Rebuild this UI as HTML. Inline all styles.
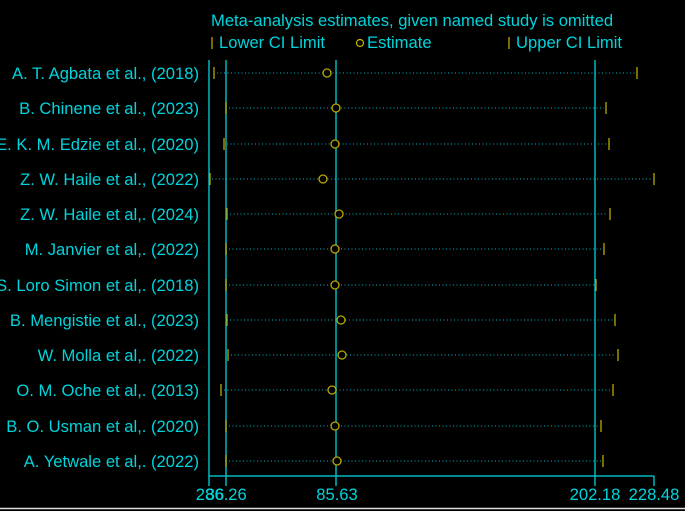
<!DOCTYPE html>
<html><head><style>
html,body{margin:0;padding:0;background:#000;width:685px;height:511px;overflow:hidden}
svg text{font-family:"Liberation Sans",sans-serif;fill:#00d4dc;font-size:16.6px}
</style></head><body>
<svg width="685" height="511" xmlns="http://www.w3.org/2000/svg">
<rect width="685" height="511" fill="#000"/>
<text x="211" y="26">Meta-analysis estimates, given named study is omitted</text>
<line x1="212" y1="37" x2="212" y2="49" stroke="#c8b400" stroke-width="1.2"/>
<text x="219" y="48">Lower CI Limit</text>
<circle cx="360" cy="43" r="3.5" fill="none" stroke="#c8b400" stroke-width="1.2"/>
<text x="367" y="48">Estimate</text>
<line x1="509" y1="37" x2="509" y2="49" stroke="#c8b400" stroke-width="1.2"/>
<text x="516" y="48">Upper CI Limit</text>
<g stroke="#00b8c0" stroke-width="1.5">
<line x1="209" y1="60" x2="209" y2="486"/>
<line x1="226" y1="60" x2="226" y2="486"/>
<line x1="336" y1="60" x2="336" y2="486"/>
<line x1="595" y1="60" x2="595" y2="486"/>
<line x1="209" y1="476" x2="654" y2="476"/>
<line x1="654" y1="476" x2="654" y2="486"/>
</g>
<line x1="0" y1="508.5" x2="685" y2="508.5" stroke="#ddd" stroke-width="1.5"/>
<g text-anchor="middle">
<text x="205" y="500">28</text><text x="226" y="500">36.26</text><text x="215" y="500">36</text>
<text x="337" y="500">85.63</text><text x="595" y="500">202.18</text><text x="654" y="500">228.48</text>
</g>
<g text-anchor="end">
<text x="199" y="79">A. T. Agbata et al., (2018)</text>
<text x="199" y="114">B. Chinene et al., (2023)</text>
<text x="199" y="150">E. K. M. Edzie et al., (2020)</text>
<text x="199" y="185">Z. W. Haile et al., (2022)</text>
<text x="199" y="220">Z. W. Haile et al,. (2024)</text>
<text x="199" y="255">M. Janvier et al,. (2022)</text>
<text x="199" y="291">S. Loro Simon et al,. (2018)</text>
<text x="199" y="326">B. Mengistie et al., (2023)</text>
<text x="199" y="361">W. Molla et al,. (2022)</text>
<text x="199" y="396">O. M. Oche et al,. (2013)</text>
<text x="199" y="432">B. O. Usman et al,. (2020)</text>
<text x="199" y="467">A. Yetwale et al,. (2022)</text>
</g>
<g stroke-dasharray="1,2.5" stroke="#00b8c0" stroke-width="1">
<line x1="217" y1="73" x2="635" y2="73"/>
<line x1="229" y1="108" x2="604" y2="108"/>
<line x1="227" y1="144" x2="607" y2="144"/>
<line x1="212" y1="179" x2="652" y2="179"/>
<line x1="230" y1="214" x2="608" y2="214"/>
<line x1="229" y1="249" x2="602" y2="249"/>
<line x1="229" y1="285" x2="594" y2="285"/>
<line x1="230" y1="320" x2="613" y2="320"/>
<line x1="231" y1="355" x2="616" y2="355"/>
<line x1="224" y1="390" x2="611" y2="390"/>
<line x1="229" y1="426" x2="599" y2="426"/>
<line x1="229" y1="461" x2="601" y2="461"/>
</g>
<g stroke="#b8a800" stroke-width="1.3">
<path d="M214 67V79M637 67V79M226 102V114M606 102V114M224 138V150M609 138V150M210 173V185M654 173V185M227 208V220M610 208V220M226 243V255M604 243V255M226 279V291M596 279V291M227 314V326M615 314V326M228 349V361M618 349V361M221 384V396M613 384V396M226 420V432M601 420V432M226 455V467M603 455V467"/>
<g fill="#000">
<circle cx="327" cy="73" r="4"/><circle cx="336" cy="108" r="4"/><circle cx="335" cy="144" r="4"/><circle cx="323" cy="179" r="4"/><circle cx="339" cy="214" r="4"/><circle cx="335" cy="249" r="4"/><circle cx="335" cy="285" r="4"/><circle cx="341" cy="320" r="4"/><circle cx="342" cy="355" r="4"/><circle cx="332" cy="390" r="4"/><circle cx="335" cy="426" r="4"/><circle cx="337" cy="461" r="4"/>
</g></g>
</svg>
</body></html>
